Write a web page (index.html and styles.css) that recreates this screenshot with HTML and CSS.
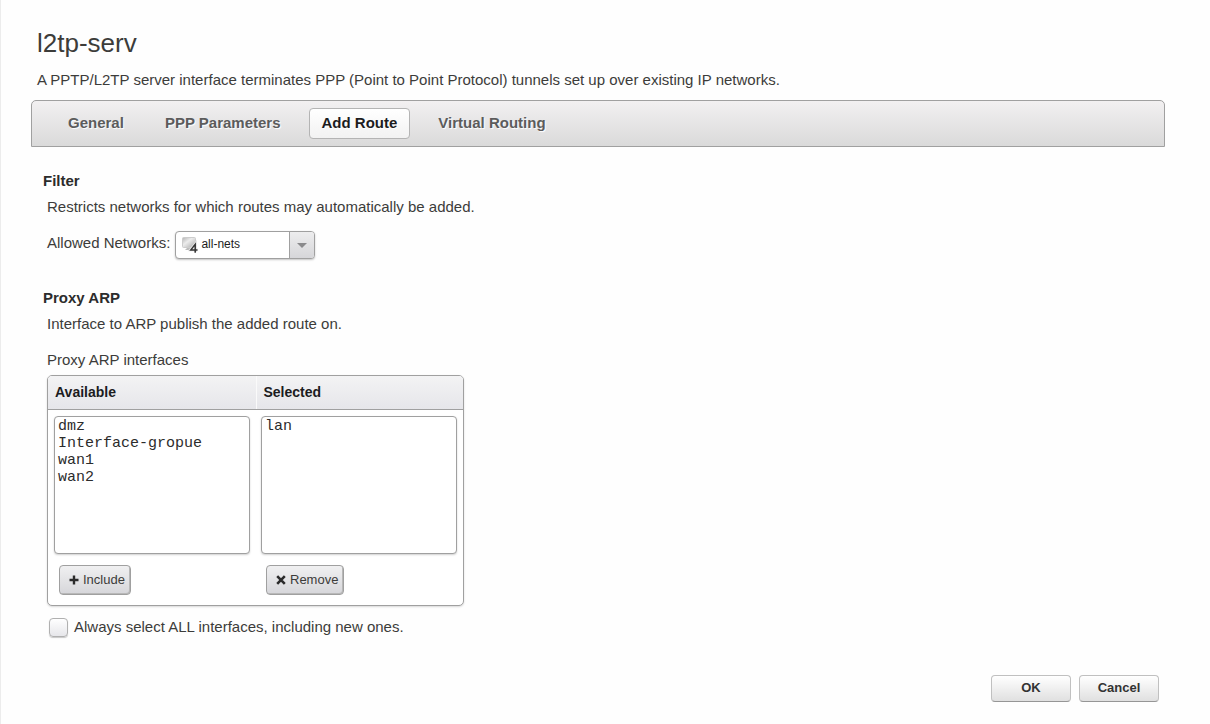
FILE: index.html
```html
<!DOCTYPE html>
<html lang="en">
<head>
<meta charset="utf-8">
<title>l2tp-serv</title>
<link rel="stylesheet" href="styles.css">
</head>
<body>
<main class="page">
  <header class="intro">
    <h1 class="title">l2tp-serv</h1>
    <p class="lead">A PPTP/L2TP server interface terminates PPP (Point to Point Protocol) tunnels set up over existing IP networks.</p>
  </header>

  <nav class="tabs">
    <button type="button" class="tab">General</button>
    <button type="button" class="tab">PPP Parameters</button>
    <button type="button" class="tab tab-active" aria-current="page">Add Route</button>
    <button type="button" class="tab">Virtual Routing</button>
  </nav>

  <form class="form">
    <section class="section">
      <h2 class="heading">Filter</h2>
      <div class="section-body">
        <p class="text">Restricts networks for which routes may automatically be added.</p>
        <div class="field">
          <label class="text" for="networks">Allowed Networks:</label>
          <div class="combo">
            <select class="combo-select" id="networks">
              <option>all-nets</option>
            </select>
            <svg class="combo-icon" viewBox="0 0 16 16" aria-hidden="true">
              <defs>
                <linearGradient id="screen" x1="0" y1="0" x2="1" y2="1">
                  <stop offset="0" stop-color="#b4b4b4"/>
                  <stop offset="0.4" stop-color="#ececec"/>
                  <stop offset="1" stop-color="#a8a8a8"/>
                </linearGradient>
              </defs>
              <rect x="0.5" y="0.5" width="13" height="10" rx="1" fill="url(#screen)" stroke="#cccccc"/>
              <path d="M5 11h5v2H3z" fill="#bcbcbc"/>
              <path d="M13.500 15V7L8.800 12.700h6.800" fill="none" stroke="#e8e8e8" stroke-width="3"/>
              <path d="M13.200 15.800V7.300L8.800 12.900h6.700" fill="none" stroke="#333333" stroke-width="1.500"/>
            </svg>
            <span class="combo-button" aria-hidden="true"></span>
          </div>
        </div>
      </div>
    </section>

    <section class="section">
      <h2 class="heading">Proxy ARP</h2>
      <div class="section-body">
        <p class="text">Interface to ARP publish the added route on.</p>
        <p class="text group-label">Proxy ARP interfaces</p>
        <div class="picker">
          <div class="picker-head">
            <label class="picker-title" for="available">Available</label>
            <label class="picker-title" for="selected">Selected</label>
          </div>
          <div class="picker-body">
            <div class="picker-column">
              <select class="list" id="available" multiple>
                <option>dmz</option>
                <option>Interface-gropue</option>
                <option>wan1</option>
                <option>wan2</option>
              </select>
              <button type="button" class="action">
                <svg class="action-icon" viewBox="0 0 10 10" aria-hidden="true"><path d="M5 0.500v9M0.500 5h9" stroke="#2b2b2b" stroke-width="2.400"/></svg>
                Include
              </button>
            </div>
            <div class="picker-column">
              <select class="list" id="selected" multiple>
                <option>lan</option>
              </select>
              <button type="button" class="action">
                <svg class="action-icon" viewBox="0 0 10 10" aria-hidden="true"><path d="M1.200 1.200l7.600 7.600M8.800 1.200l-7.600 7.600" stroke="#2b2b2b" stroke-width="2.600"/></svg>
                Remove
              </button>
            </div>
          </div>
        </div>
        <label class="check text">
          <input type="checkbox" class="check-box">
          Always select ALL interfaces, including new ones.
        </label>
      </div>
    </section>

    <footer class="footer">
      <button type="submit" class="button">OK</button>
      <button type="button" class="button">Cancel</button>
    </footer>
  </form>
</main>
</body>
</html>
```

FILE: styles.css
```css
* {
  box-sizing: border-box;
}

body {
  margin: 0;
  background: #fefefe;
  color: #3c3c3a;
  font-family: "Liberation Sans", Arial, sans-serif;
  font-size: 15px;
  line-height: 20px;
}

.page {
  min-height: 100vh;
  padding: 28px 45px 20px 30px;
  border-left: 1px solid #ececec;
}

.intro {
  padding-left: 6px;
}

.title {
  margin: 0 0 12px;
  font-size: 26px;
  font-weight: 400;
  line-height: 30px;
}

.lead,
.text {
  margin: 0;
}

.tabs {
  display: flex;
  align-items: center;
  gap: 15px;
  margin-top: 10px;
  padding: 7px 23px;
  border: 1px solid #a0a0a0;
  border-radius: 5px 5px 0 0;
  background: linear-gradient(#f2f0f1, #dadada);
}

.tab {
  height: 31px;
  padding: 0 12px 2px;
  border: 1px solid transparent;
  border-radius: 4px;
  background: none;
  color: #5c5c5c;
  font: bold 15px/20px "Liberation Sans", Arial, sans-serif;
  text-shadow: 1px 1px 1px #ffffff;
}

.tab-active {
  border-color: #b4b4b4;
  background: linear-gradient(#ffffff, #f2f2f2);
  color: #1c1c1e;
}

.form {
  padding: 24px 6px 0 12px;
}

.section + .section {
  margin-top: 29px;
}

.heading {
  margin: 0 0 6px;
  color: #2c2c2c;
  font-size: 15px;
  font-weight: 700;
  line-height: 20px;
}

.section-body {
  padding-left: 4px;
}

.field {
  display: flex;
  align-items: flex-start;
  gap: 5px;
  margin-top: 14px;
}

.field .text {
  padding-top: 2px;
}

.combo {
  position: relative;
  width: 140px;
}

.combo-select {
  display: block;
  width: 100%;
  height: 28px;
  padding: 0 28px 3px 25px;
  border: 1px solid #a0a0a0;
  border-radius: 4px;
  appearance: none;
  background: #ffffff;
  box-shadow: 0 1px 2px #c4c4c4;
  color: #1c1c1c;
  font: 12px/16px "Liberation Sans", Arial, sans-serif;
}

.combo-icon {
  position: absolute;
  top: 6px;
  left: 7px;
  width: 16px;
  height: 16px;
  pointer-events: none;
}

.combo-button {
  position: absolute;
  top: 1px;
  right: 1px;
  bottom: 1px;
  display: grid;
  place-items: center;
  width: 25px;
  border-left: 1px solid #a0a0a0;
  border-radius: 0 3px 3px 0;
  background: linear-gradient(#ededee, #d6d6d9);
  pointer-events: none;
}

.combo-button::before {
  content: "";
  border: 5px solid transparent;
  border-top-color: #8a8a8c;
  border-bottom: 0;
}

.group-label {
  margin-top: 16px;
}

.picker {
  max-width: 417px;
  margin-top: 5px;
  border: 1px solid #a0a0a0;
  border-radius: 5px;
  background: #ffffff;
  box-shadow: 0 1px 2px #d8d8d8;
}

.picker-head {
  display: grid;
  grid-template-columns: 1fr 1fr;
  border-bottom: 1px solid #a0a0a0;
  border-radius: 4px 4px 0 0;
  background: linear-gradient(#f3f3f4, #e6e6ea);
}

.picker-title {
  padding: 6px 7px 7px;
  color: #1c1c1e;
  font-size: 14px;
  font-weight: 700;
}

.picker-title + .picker-title {
  border-left: 1px solid #fafafa;
}

.picker-body {
  display: grid;
  grid-template-columns: 1fr 1fr;
  gap: 11px;
  padding: 6px 6px 10px;
}

.picker-column {
  display: flex;
  flex-direction: column;
  align-items: flex-start;
  gap: 11px;
}

.list {
  width: 100%;
  height: 138px;
  padding: 1px 0 0 1px;
  border: 1px solid #a0a0a0;
  border-radius: 4px;
  background: #ffffff;
  box-shadow: 0 1px 2px #d0d0d0;
  color: #2c2c2c;
  font: 15px/17px "Liberation Mono", "Courier New", monospace;
}

.list option {
  height: 17px;
  min-height: 17px;
  padding: 0 2px;
}

.action {
  display: flex;
  align-items: center;
  gap: 4px;
  height: 30px;
  margin-left: 5px;
  padding: 0 5px 0 9px;
  border: 1px solid #a0a0a0;
  border-radius: 4px;
  background: linear-gradient(#f0f0f1, #d6d6da);
  box-shadow: inset -1px -1px 0 #b8b8b8;
  color: #3c3c3a;
  font: 13px/20px "Liberation Sans", Arial, sans-serif;
}

.action-icon {
  width: 10px;
  height: 10px;
}

.check {
  display: flex;
  align-items: center;
  gap: 6px;
  margin: 11px 0 0 2px;
}

.check-box {
  width: 19px;
  height: 19px;
  margin: 0;
  border: 1px solid #b0b0b0;
  border-radius: 4px;
  appearance: none;
  background: linear-gradient(#ffffff, #e6e6ea);
  box-shadow: 0 1px 1px #c8c8c8;
}

.footer {
  display: flex;
  justify-content: flex-end;
  gap: 8px;
  margin-top: 38px;
}

.button {
  width: 80px;
  height: 27px;
  padding: 0 0 2px;
  border: 1px solid #c0c0c0;
  border-bottom-color: #969696;
  border-radius: 4px;
  background: linear-gradient(#ffffff, #e0e0e0);
  color: #333333;
  font: bold 13px/16px "Liberation Sans", Arial, sans-serif;
}
```
